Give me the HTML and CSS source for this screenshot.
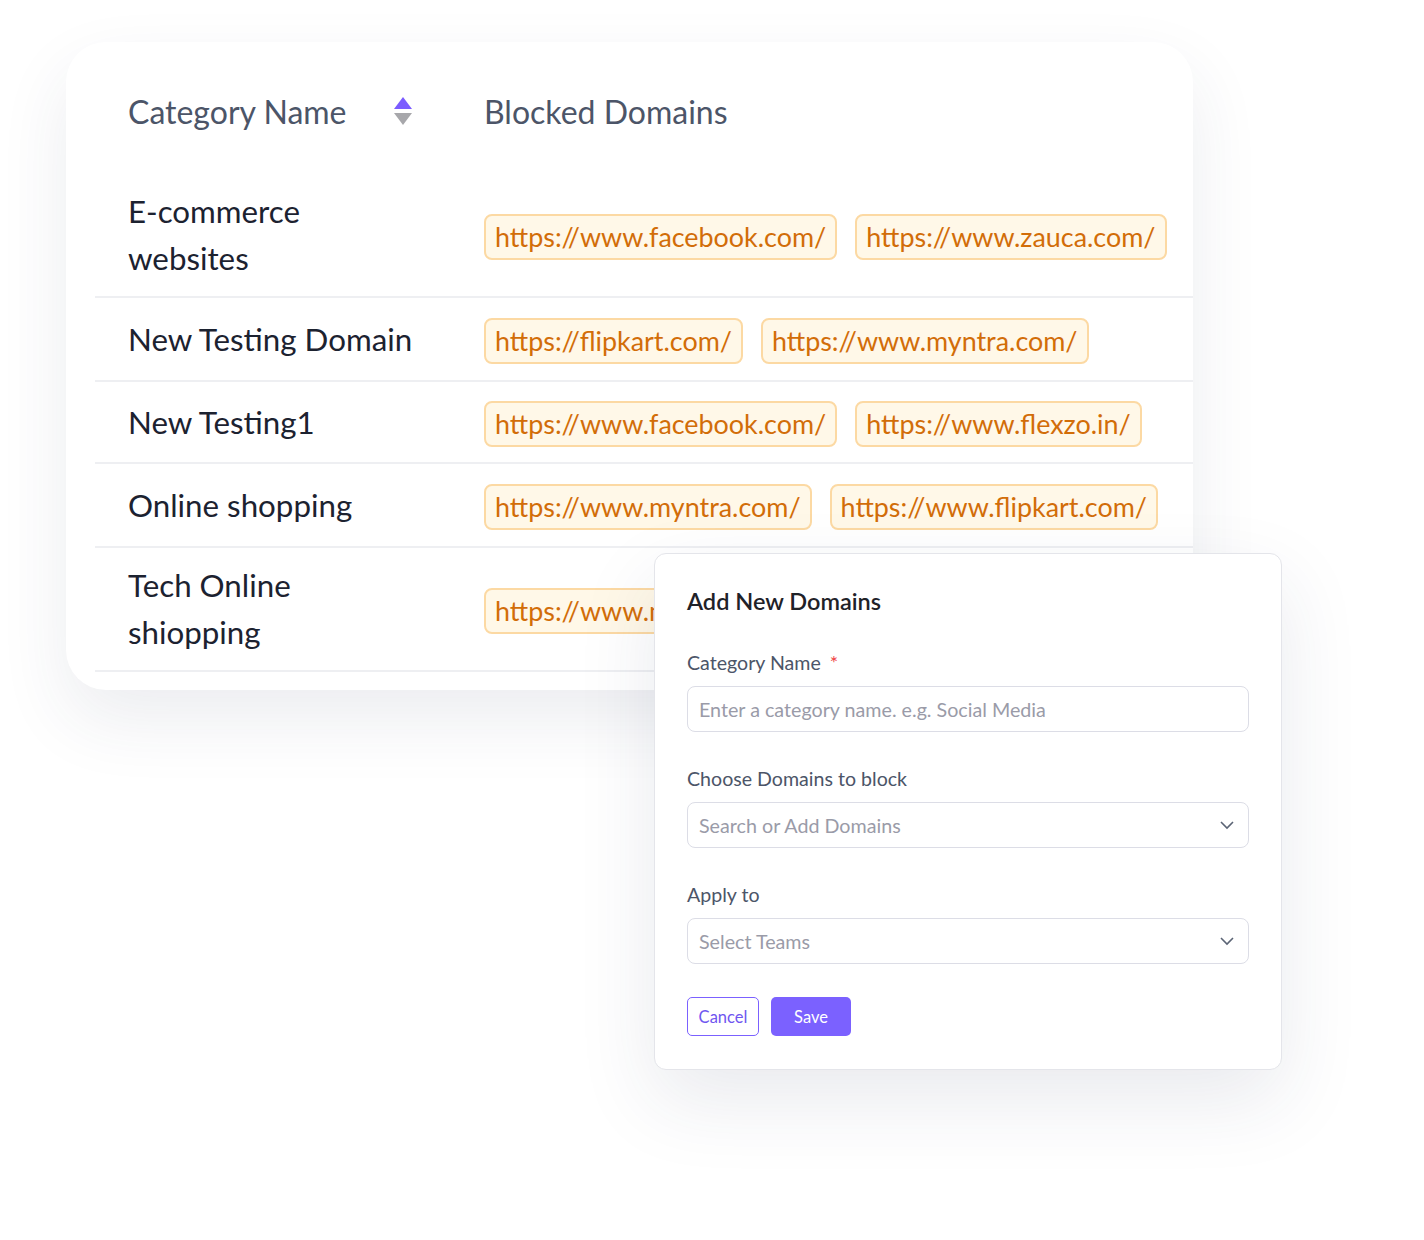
FILE: index.html
```html
<!DOCTYPE html>
<html lang="en">
<head>
    <meta charset="UTF-8">
    <meta name="viewport" content="width=device-width, initial-scale=1.0">
    <title>Blocked Domains</title>
    <link rel="stylesheet" href="styles.css">
</head>
<body>
    <div class="stage">
        <!-- Tabla de categorías -->
        <div class="card">
            <div class="table">
                <div class="row head">
                    <div class="cell name">
                        Category Name
                        <svg class="sort" width="20" height="30" viewBox="0 0 20 30">
                            <path d="M10 1 L19 13 L1 13 Z" fill="#7b5cff"/>
                            <path d="M1 17 L19 17 L10 29 Z" fill="#a7a7ab"/>
                        </svg>
                    </div>
                    <div class="cell">Blocked Domains</div>
                </div>
                <div class="row tall">
                    <div class="cell name">E-commerce<br>websites</div>
                    <div class="cell tags">
                        <span class="tag">https://www.facebook.com/</span>
                        <span class="tag">https://www.zauca.com/</span>
                    </div>
                </div>
                <div class="row">
                    <div class="cell name">New Testing Domain</div>
                    <div class="cell tags">
                        <span class="tag">https://flipkart.com/</span>
                        <span class="tag">https://www.myntra.com/</span>
                    </div>
                </div>
                <div class="row">
                    <div class="cell name">New Testing1</div>
                    <div class="cell tags">
                        <span class="tag">https://www.facebook.com/</span>
                        <span class="tag">https://www.flexzo.in/</span>
                    </div>
                </div>
                <div class="row">
                    <div class="cell name">Online shopping</div>
                    <div class="cell tags">
                        <span class="tag">https://www.myntra.com/</span>
                        <span class="tag">https://www.flipkart.com/</span>
                    </div>
                </div>
                <div class="row tall">
                    <div class="cell name">Tech Online<br>shiopping</div>
                    <div class="cell tags">
                        <span class="tag">https://www.myntra.com/</span>
                    </div>
                </div>
            </div>
        </div>

        <!-- Formulario para nuevos dominios -->
        <div class="modal">
            <h2>Add New Domains</h2>

            <label class="label">Category Name <span class="req">*</span></label>
            <div class="field">Enter a category name. e.g. Social Media</div>

            <label class="label">Choose Domains to block</label>
            <div class="field select">
                Search or Add Domains
                <svg width="16" height="10" viewBox="0 0 16 10"><path d="M2 2 L8 8 L14 2" fill="none" stroke="#5b6475" stroke-width="1.6"/></svg>
            </div>

            <label class="label">Apply to</label>
            <div class="field select">
                Select Teams
                <svg width="16" height="10" viewBox="0 0 16 10"><path d="M2 2 L8 8 L14 2" fill="none" stroke="#5b6475" stroke-width="1.6"/></svg>
            </div>

            <div class="actions">
                <button class="btn outline">Cancel</button>
                <button class="btn primary">Save</button>
            </div>
        </div>
    </div>
</body>
</html>
```

FILE: styles.css
```css
body {
    margin: 0;
    background: #fff;
    font-family: Lato, "Open Sans", sans-serif;
}

.stage {
    position: relative;
    width: 1424px;
    height: 1240px;
    padding: 42px 0 0 66px;
    box-sizing: border-box;
}

/* Tarjeta con la tabla */
.card {
    width: 1127px;
    height: 648px;
    background: #fff;
    border-radius: 40px 40px 0 40px;
    box-shadow: 0 30px 70px rgba(40, 50, 90, 0.09);
    padding-left: 29px;
    box-sizing: border-box;
}

.row {
    display: grid;
    grid-template-columns: 389px 1fr;
    height: 84px;
    border-bottom: 2px solid #eeeff2;
    box-sizing: border-box;
    align-items: center;
}

.row:nth-child(4) {
    height: 82px;
}

.row.tall {
    height: 124px;
}

.row.head {
    height: 132px;
    padding-top: 6px;
    border-bottom: none;
    color: #4c5568;
    font-size: 32px;
}

.cell.name {
    padding-left: 33px;
    font-size: 31.3px;
    line-height: 47px;
    color: #1c2230;
}

.head .cell.name {
    color: #4c5568;
    font-size: 32px;
    display: flex;
    align-items: center;
}

.sort {
    margin-left: 46px;
}

.tags {
    display: flex;
    gap: 18px;
    overflow: hidden;
    white-space: nowrap;
    padding-top: 3px;
}

.tag {
    display: inline-block;
    height: 46px;
    line-height: 42px;
    padding: 0 9px;
    box-sizing: border-box;
    border: 2px solid #fcd9a3;
    border-radius: 8px;
    background: #fff8e8;
    color: #d26d08;
    font-size: 26.9px;
}

/* Modal */
.modal {
    position: absolute;
    left: 654px;
    top: 553px;
    width: 628px;
    height: 517px;
    box-sizing: border-box;
    padding: 32px;
    background: #fff;
    border: 1px solid #e4e5ea;
    border-radius: 12px;
    box-shadow: 0 30px 80px rgba(40, 50, 90, 0.10);
}

.modal h2 {
    margin: 0 0 32px;
    font-size: 23.5px;
    font-weight: 600;
    color: #1f2228;
    line-height: 31px;
}

.label {
    display: block;
    font-size: 19.6px;
    color: #4c5568;
    line-height: 28px;
    margin-bottom: 9px;
}

.req {
    color: #ef4444;
    margin-left: 4px;
}

.field {
    height: 46px;
    box-sizing: border-box;
    border: 1.5px solid #dcdde6;
    border-radius: 8px;
    padding: 0 11px;
    display: flex;
    align-items: center;
    justify-content: space-between;
    font-size: 19.7px;
    color: #9a9ba8;
    margin-bottom: 33px;
}

.select svg {
    margin-right: 2px;
}

.actions {
    display: flex;
    gap: 12px;
    margin-top: 8px;
}

.btn {
    height: 39px;
    border-radius: 5px;
    font-family: Lato, sans-serif;
    font-size: 16.5px;
    padding: 0 10px;
    cursor: pointer;
}

.btn.outline {
    background: #fff;
    border: 1.5px solid #7b61ff;
    color: #6f56f0;
    width: 72px;
}

.btn.primary {
    background: #7b61ff;
    border: none;
    color: #fff;
    width: 80px;
}
```
